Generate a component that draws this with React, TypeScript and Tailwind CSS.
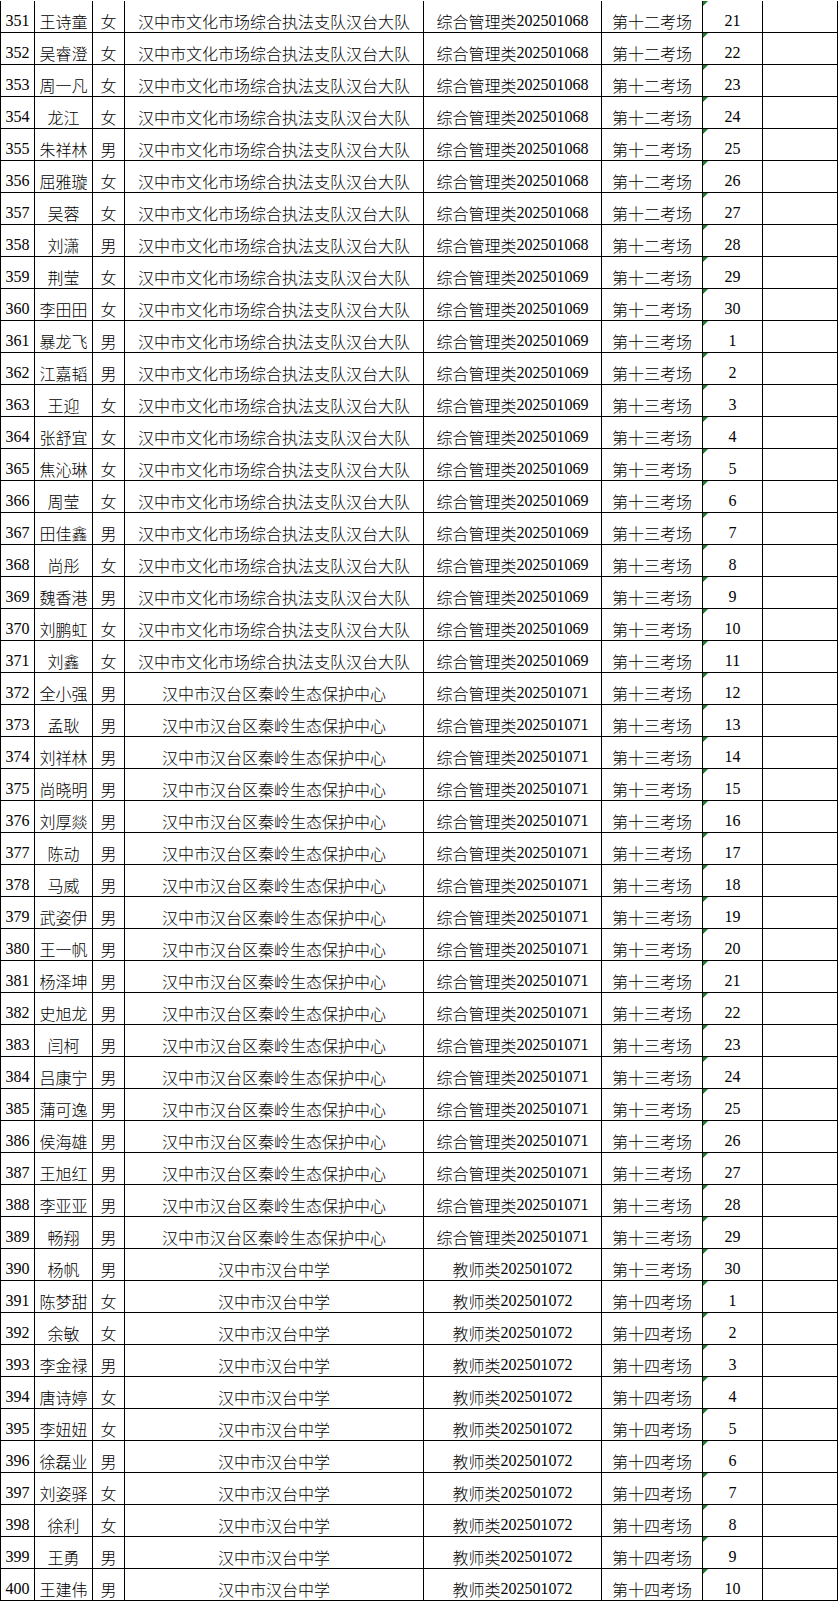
import React from 'react';

type Row = [number, string, string, number, string, number];

const UNITS = [
  '汉中市文化市场综合执法支队汉台大队',
  '汉中市汉台区秦岭生态保护中心',
  '汉中市汉台中学',
];

// [no, name, gender, unitIndex, code, seat]
const rows: Row[] = [
  [351, '王诗童', '女', 0, '综合管理类|202501068', 21],
  [352, '吴睿澄', '女', 0, '综合管理类|202501068', 22],
  [353, '周一凡', '女', 0, '综合管理类|202501068', 23],
  [354, '龙江', '女', 0, '综合管理类|202501068', 24],
  [355, '朱祥林', '男', 0, '综合管理类|202501068', 25],
  [356, '屈雅璇', '女', 0, '综合管理类|202501068', 26],
  [357, '吴蓉', '女', 0, '综合管理类|202501068', 27],
  [358, '刘潇', '男', 0, '综合管理类|202501068', 28],
  [359, '荆莹', '女', 0, '综合管理类|202501069', 29],
  [360, '李田田', '女', 0, '综合管理类|202501069', 30],
  [361, '暴龙飞', '男', 0, '综合管理类|202501069', 1],
  [362, '江嘉韬', '男', 0, '综合管理类|202501069', 2],
  [363, '王迎', '女', 0, '综合管理类|202501069', 3],
  [364, '张舒宜', '女', 0, '综合管理类|202501069', 4],
  [365, '焦沁琳', '女', 0, '综合管理类|202501069', 5],
  [366, '周莹', '女', 0, '综合管理类|202501069', 6],
  [367, '田佳鑫', '男', 0, '综合管理类|202501069', 7],
  [368, '尚彤', '女', 0, '综合管理类|202501069', 8],
  [369, '魏香港', '男', 0, '综合管理类|202501069', 9],
  [370, '刘鹏虹', '女', 0, '综合管理类|202501069', 10],
  [371, '刘鑫', '女', 0, '综合管理类|202501069', 11],
  [372, '全小强', '男', 1, '综合管理类|202501071', 12],
  [373, '孟耿', '男', 1, '综合管理类|202501071', 13],
  [374, '刘祥林', '男', 1, '综合管理类|202501071', 14],
  [375, '尚晓明', '男', 1, '综合管理类|202501071', 15],
  [376, '刘厚燚', '男', 1, '综合管理类|202501071', 16],
  [377, '陈动', '男', 1, '综合管理类|202501071', 17],
  [378, '马威', '男', 1, '综合管理类|202501071', 18],
  [379, '武姿伊', '男', 1, '综合管理类|202501071', 19],
  [380, '王一帆', '男', 1, '综合管理类|202501071', 20],
  [381, '杨泽坤', '男', 1, '综合管理类|202501071', 21],
  [382, '史旭龙', '男', 1, '综合管理类|202501071', 22],
  [383, '闫柯', '男', 1, '综合管理类|202501071', 23],
  [384, '吕康宁', '男', 1, '综合管理类|202501071', 24],
  [385, '蒲可逸', '男', 1, '综合管理类|202501071', 25],
  [386, '侯海雄', '男', 1, '综合管理类|202501071', 26],
  [387, '王旭红', '男', 1, '综合管理类|202501071', 27],
  [388, '李亚亚', '男', 1, '综合管理类|202501071', 28],
  [389, '畅翔', '男', 1, '综合管理类|202501071', 29],
  [390, '杨帆', '男', 2, '教师类|202501072', 30],
  [391, '陈梦甜', '女', 2, '教师类|202501072', 1],
  [392, '余敏', '女', 2, '教师类|202501072', 2],
  [393, '李金禄', '男', 2, '教师类|202501072', 3],
  [394, '唐诗婷', '女', 2, '教师类|202501072', 4],
  [395, '李妞妞', '女', 2, '教师类|202501072', 5],
  [396, '徐磊业', '男', 2, '教师类|202501072', 6],
  [397, '刘姿驿', '女', 2, '教师类|202501072', 7],
  [398, '徐利', '女', 2, '教师类|202501072', 8],
  [399, '王勇', '男', 2, '教师类|202501072', 9],
  [400, '王建伟', '男', 2, '教师类|202501072', 10],
];

const roomFor = (no: number) => {
  if (no <= 360) return '第十二考场';
  if (no <= 390) return '第十三考场';
  return '第十四考场';
};

const cell = 'flex items-center justify-center pt-[9px] border-r border-b border-black whitespace-nowrap overflow-hidden';
const num = "font-['Liberation_Serif'] text-[16px]";

export default function App() {
  return (
    <div className="w-[838px] h-[1601px] bg-white overflow-hidden pt-px text-black text-[16px] leading-[16px] font-light font-['Noto_Sans_CJK_SC',sans-serif]">
      <div className="grid grid-cols-[34px_58px_32px_299px_178px_101px_60px_75px] auto-rows-[32px] border-l border-black">
        {rows.map(([no, name, gender, unit, code, seat]) => {
          const [kind, digits] = code.split('|');
          return (
            <React.Fragment key={no}>
              <div className={cell}>
                <span className={num}>{no}</span>
              </div>
              <div className={cell}>{name}</div>
              <div className={cell}>{gender}</div>
              <div className={cell}>{UNITS[unit]}</div>
              <div className={cell}>
                <span>{kind}</span>
                <span className={num}>{digits}</span>
              </div>
              <div className={cell}>{roomFor(no)}</div>
              <div className={`${cell} relative`}>
                <span className="absolute left-0 top-0 w-0 h-0 border-t-[5px] border-r-[5px] border-t-[#1e7b1e] border-r-transparent" />
                <span className={num}>{seat}</span>
              </div>
              <div className={cell} />
            </React.Fragment>
          );
        })}
      </div>
    </div>
  );
}
